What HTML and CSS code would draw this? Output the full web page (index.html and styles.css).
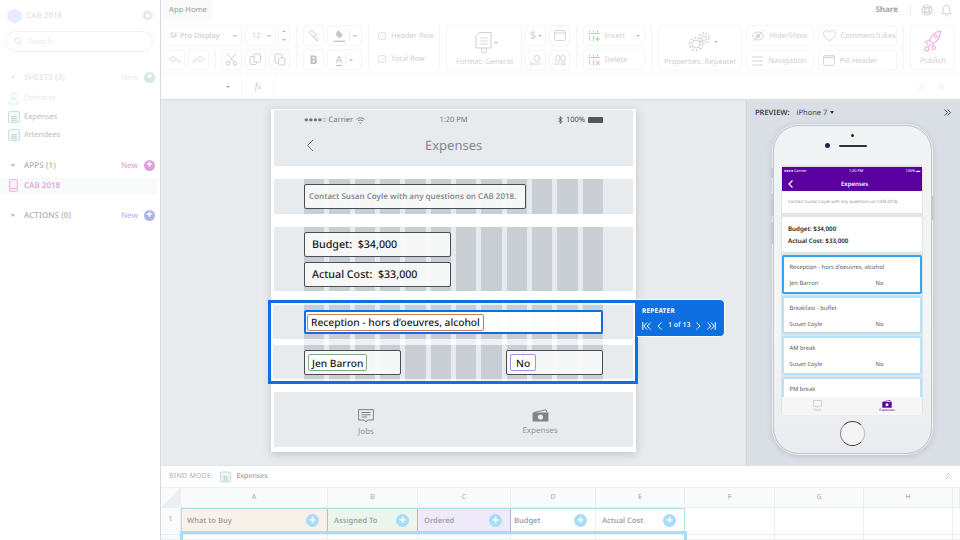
FILE: index.html
```html
<!DOCTYPE html>
<html lang="en">
<head>
  <meta charset="UTF-8" />
  <title>App Home</title>
  <link rel="stylesheet" href="styles.css">
</head>
<body>
<div class="app">

  <aside class="sidebar">
    <div class="brand">
      <svg class="logo" width="15" height="16" viewBox="0 0 15 16"><path d="M7.5 0.5 14.5 4.2V11.8L7.5 15.5 0.5 11.8V4.2Z" fill="#ecebfa"/><path d="M7.5 4 14.5 4.2V11.8L7.5 15.5Z" fill="#e2effa"/></svg>
      <span class="brand-name">CAB 2018</span>
      <svg class="brand-gear" width="11" height="11" viewBox="0 0 12 12"><circle cx="6" cy="6" r="3.4" fill="none" stroke="#e6e6e6" stroke-width="2"/><circle cx="6" cy="6" r="5" fill="none" stroke="#e6e6e6" stroke-width="1.6" stroke-dasharray="1.6 1.6"/></svg>
    </div>
    <div class="search">
      <svg width="9" height="9" viewBox="0 0 10 10"><circle cx="4" cy="4" r="3" fill="none" stroke="#e2e2e2" stroke-width="1.1"/><path d="M6.3 6.3 9 9" stroke="#e2e2e2" stroke-width="1.1"/></svg>
      <span>Search…</span>
    </div>

    <div class="sec sec-sheets">
      <span class="caret"></span><span class="sec-title">SHEETS (3)</span>
      <span class="sec-new">New</span><span class="plus">+</span>
    </div>
    <ul class="items">
      <li class="item item-dim">
        <svg width="12" height="13" viewBox="0 0 12 13"><circle cx="5.5" cy="4" r="2.8" fill="none" stroke="#d8ece9"/><path d="M0.8 12C0.8 8.5 3 7.5 5.5 7.5S10 8.500 10 12Z" fill="none" stroke="#d8ece9"/></svg>
        Contacts
      </li>
      <li class="item">
        <svg width="12" height="12" viewBox="0 0 12 12"><rect x=".6" y=".6" width="10.800" height="10.800" rx="1" fill="#f4fafa" stroke="#bfe0dc"/><path d="M3 5.500H9M3 7.500H9M3 9.500H9M5 5.500V9.500M7 5.500V9.500" stroke="#bfd6d4" stroke-width=".8"/></svg>
        Expenses
      </li>
      <li class="item">
        <svg width="12" height="12" viewBox="0 0 12 12"><rect x=".6" y=".6" width="10.800" height="10.800" rx="1" fill="#f4fafa" stroke="#bfe0dc"/><path d="M3 5.500H9M3 7.500H9M3 9.500H9M5 5.500V9.500M7 5.500V9.500" stroke="#bfd6d4" stroke-width=".8"/></svg>
        Attendees
      </li>
    </ul>

    <div class="sec sec-apps">
      <span class="caret"></span><span class="sec-title">APPS (1)</span>
      <span class="sec-new new-pink">New</span><span class="plus plus-pink">+</span>
    </div>
    <div class="app-row">
      <svg width="9" height="13" viewBox="0 0 9 13"><rect x=".6" y=".6" width="7.800" height="11.800" rx="1.200" fill="#fbeef8" stroke="#e9b4df"/><path d="M.6 9.500H8.400" stroke="#e9b4df"/></svg>
      <span>CAB 2018</span>
    </div>

    <div class="sec sec-actions">
      <span class="caret"></span><span class="sec-title">ACTIONS (0)</span>
      <span class="sec-new new-blue">New</span><span class="plus plus-blue">+</span>
    </div>
  </aside>

  <main class="main">
    <header class="tabs">
      <div class="tab">App Home</div>
      <div class="tabs-right">
        <span class="share">Share</span>
        <svg width="12" height="12" viewBox="0 0 12 12"><circle cx="6" cy="6" r="5" fill="none" stroke="#cfcfcf" stroke-width="1.100"/><circle cx="6" cy="6" r="2.400" fill="none" stroke="#cfcfcf" stroke-width="1.100"/><path d="M2.500 2.500 4.300 4.300M9.500 2.500 7.700 4.300M2.500 9.500 4.300 7.700M9.500 9.500 7.700 7.700" stroke="#cfcfcf" stroke-width="1.100"/></svg>
        <svg width="11" height="13" viewBox="0 0 11 13"><path d="M5.500 1C3 1 2.300 3 2.300 5.500 2.300 8 1.500 9 .8 9.800H10.200C9.500 9 8.700 8 8.700 5.500 8.700 3 8 1 5.500 1Z" fill="none" stroke="#cfcfcf"/><path d="M4.300 11.300C4.800 12.300 6.200 12.300 6.700 11.300" fill="none" stroke="#cfcfcf"/></svg>
      </div>
    </header>

    <section class="ribbon">
      <div class="rgroup g-font">
        <div class="rrow">
          <div class="rbtn font-name"><span>SF Pro Display</span><i class="drop"></i></div>
          <div class="rbtn font-size"><span>12</span><i class="drop"></i></div>
          <div class="stepper"><i class="up"></i><i class="down"></i></div>
        </div>
        <div class="rrow">
          <div class="rbtn sq"><svg width="13" height="9" viewBox="0 0 13 9"><path d="M5 .8 .8 4 5 7V5.200C8 5 10.500 5.500 12 8 12 4.500 9 2.800 5 2.800Z" fill="none" stroke="#dcdcdc" stroke-width=".9"/></svg></div>
          <div class="rbtn sq"><svg width="13" height="9" viewBox="0 0 13 9"><path d="M8 .8 12.200 4 8 7V5.200C5 5 2.500 5.500 1 8 1 4.500 4 2.800 8 2.800Z" fill="none" stroke="#dcdcdc" stroke-width=".9"/></svg></div>
          <span class="rsep"></span>
          <div class="rbtn sq"><svg width="13" height="13" viewBox="0 0 13 13"><path d="M2 .5 9 9M11 .5 4 9" stroke="#c9c9c9" stroke-width=".9"/><circle cx="3" cy="10.500" r="1.800" fill="none" stroke="#c9c9c9" stroke-width=".9"/><circle cx="10" cy="10.500" r="1.800" fill="none" stroke="#c9c9c9" stroke-width=".9"/></svg></div>
          <div class="rbtn sq"><svg width="13" height="13" viewBox="0 0 13 13"><rect x="1" y="3.500" width="6.500" height="8" rx="1" fill="none" stroke="#cfcfcf"/><rect x="5" y="1" width="6.500" height="8" rx="1" fill="#fff" stroke="#cfcfcf"/></svg></div>
          <div class="rbtn sq"><svg width="12" height="13" viewBox="0 0 12 13"><rect x="1" y="1" width="7" height="9" rx="1" fill="none" stroke="#cfcfcf"/><rect x="4.500" y="5" width="6.500" height="7" rx="1" fill="#fff" stroke="#cfcfcf"/></svg></div>
        </div>
      </div>

      <div class="rgroup g-paint">
        <div class="rrow">
          <div class="rbtn sq"><svg width="13" height="13" viewBox="0 0 13 13"><path d="M4.500 1 9 5.500 6.500 8 2 3.500Z" fill="none" stroke="#c9c9c9"/><path d="M7.500 7 11 10.500 10 12 6.500 8.500" fill="none" stroke="#c9c9c9"/></svg></div>
          <div class="rbtn wide"><svg width="13" height="13" viewBox="0 0 13 13"><path d="M5 1 10 6 6.500 9.500 2.500 5.500Z" fill="#c9c9c9"/><path d="M.5 12.300H12" stroke="#b9b9b9" stroke-width="1.200"/></svg><i class="split"></i><i class="drop"></i></div>
        </div>
        <div class="rrow">
          <div class="rbtn sq bold-b">B</div>
          <div class="rbtn wide"><span class="color-a">A</span><i class="split"></i><i class="drop"></i></div>
        </div>
      </div>

      <div class="rgroup g-checks">
        <label class="check"><i></i>Header Row</label>
        <label class="check"><i></i>Total Row</label>
      </div>

      <div class="rgroup g-format">
        <div class="rbtn big fmt">
          <div class="big-icon">
            <svg width="17" height="22" viewBox="0 0 17 22"><path d="M4 .6H16V16H1V4Z" fill="none" stroke="#cfcfcf"/><path d="M4.500 6H12.500M4.500 9H12.500M4.500 12H12.500" stroke="#d6d6d6"/><circle cx="9" cy="18.500" r="2.600" fill="#fff" stroke="#cfcfcf"/></svg>
            <i class="drop"></i>
          </div>
          <span>Format: General</span>
        </div>
        <div class="fmt-grid">
          <div class="rbtn sq dollar"><span>$</span><i class="drop"></i></div>
          <div class="rbtn sq"><svg width="12" height="11" viewBox="0 0 12 11"><rect x=".6" y=".6" width="10.800" height="9.800" rx="1" fill="none" stroke="#d4d4d4"/><path d="M.6 3H11.400" stroke="#d4d4d4"/></svg></div>
          <div class="rbtn sq"><svg width="13" height="13" viewBox="0 0 13 13"><ellipse cx="8" cy="4.500" rx="2.500" ry="3.500" fill="none" stroke="#d4d4d4"/><path d="M12 10H1M3 8 1 10 3 12M1 6.500H2" fill="none" stroke="#d4d4d4" stroke-width=".9"/></svg></div>
          <div class="rbtn sq"><svg width="13" height="13" viewBox="0 0 13 13"><ellipse cx="5" cy="4.500" rx="2" ry="3.500" fill="none" stroke="#d4d4d4"/><ellipse cx="10" cy="4.500" rx="2" ry="3.500" fill="none" stroke="#d4d4d4"/><path d="M1 10H12M10 8 12 10 10 12" fill="none" stroke="#d4d4d4" stroke-width=".9"/></svg></div>
        </div>
      </div>

      <div class="rgroup g-table">
        <div class="rbtn tool">
          <svg width="12" height="12" viewBox="0 0 12 12"><path d="M.5 3.500H11.500" stroke="#a9d9a9"/><path d="M1.500 .5V2.500M5.500 .5V2.500M9.500 .5V2.500M1.500 5.500V11M5.500 5.500V11" stroke="#c9c9c9"/><path d="M9.500 6.500V11.500M7 9H12" stroke="#a9d9a9" stroke-width="1.200"/></svg>
          <span>Insert</span><i class="drop"></i>
        </div>
        <div class="rbtn tool">
          <svg width="12" height="12" viewBox="0 0 12 12"><path d="M.5 3.500H11.500" stroke="#e8b4b4"/><path d="M1.500 .5V2.500M5.500 .5V2.500M9.500 .5V2.500M1.500 5.500V11M5.500 5.500V11" stroke="#c9c9c9"/><path d="M8 7 11.500 11M11.500 7 8 11" stroke="#e8b4b4" stroke-width="1.100"/></svg>
          <span>Delete</span>
        </div>
      </div>

      <div class="rgroup g-props">
        <div class="rbtn big props">
          <div class="big-icon">
            <svg width="24" height="20" viewBox="0 0 24 20"><circle cx="8" cy="12" r="4" fill="none" stroke="#cfcfcf"/><circle cx="8" cy="12" r="6.500" fill="none" stroke="#cfcfcf" stroke-width="1.500" stroke-dasharray="2 2"/><circle cx="16" cy="6" r="2.500" fill="none" stroke="#cfcfcf"/><circle cx="16" cy="6" r="5" fill="none" stroke="#cfcfcf" stroke-width="1.300" stroke-dasharray="2 1.500"/></svg>
            <i class="drop"></i>
          </div>
          <span>Properties: Repeater</span>
        </div>
        <div class="tool-grid">
          <div class="rbtn tool">
            <svg width="14" height="12" viewBox="0 0 14 12"><path d="M1 6C3 3 5 2 7 2S11 3 13 6C11 9 9 10 7 10S3 9 1 6Z" fill="none" stroke="#d4d4d4"/><circle cx="7" cy="6" r="2" fill="#d4d4d4"/><path d="M2.500 11.500 12 .5" stroke="#d4d4d4"/></svg>
            <span>Hide/Show</span>
          </div>
          <div class="rbtn tool">
            <svg width="13" height="12" viewBox="0 0 13 12"><path d="M6.500 11C1 7 .6 5 .6 3.500.6 1.800 2 .6 3.600 .6 5 .6 6 1.300 6.500 2.400 7 1.300 8 .6 9.400 .6 11 .6 12.400 1.800 12.400 3.500 12.400 5 12 7 6.500 11Z" fill="none" stroke="#d0d0d0"/></svg>
            <span>Comment/Likes</span>
          </div>
          <div class="rbtn tool">
            <svg width="13" height="10" viewBox="0 0 13 10"><path d="M1 1H12M1 5H12M1 9H12" stroke="#d4d4d4"/></svg>
            <span>Navigation</span>
          </div>
          <div class="rbtn tool">
            <svg width="12" height="11" viewBox="0 0 12 11"><rect x=".6" y=".6" width="10.800" height="9.800" rx="1" fill="none" stroke="#d4d4d4"/><path d="M.6 2.500H11.400" stroke="#d4d4d4" stroke-width="1.400"/></svg>
            <span>Pill Header</span>
          </div>
        </div>
      </div>

      <div class="rgroup g-publish">
        <div class="rbtn big publish">
          <svg width="19" height="23" viewBox="0 0 16 20"><path d="M15 1C10.500 1.500 7 4.500 5.500 9L8.500 12C12.500 10 14.800 6 15 1Z" fill="none" stroke="#f0b3e6" stroke-width="1.100"/><circle cx="10.800" cy="5.500" r="1.300" fill="none" stroke="#f0b3e6"/><circle cx="3" cy="16.500" r="1.800" fill="none" stroke="#f0b3e6"/><circle cx="9" cy="15.500" r="1.500" fill="none" stroke="#f0b3e6"/><path d="M5.500 9 2 10 4 13M8.500 12 8 14M4.500 14.500 6.500 12" fill="none" stroke="#f0b3e6"/></svg>
          <span>Publish</span>
        </div>
      </div>
    </section>

    <section class="formula">
      <i class="drop formula-drop"></i>
      <span class="fx"><i>f</i><small>x</small></span>
      <span class="formula-btns">
        <svg width="8" height="7" viewBox="0 0 8 7"><path d="M.5 4 3 6 7.500 .5" fill="none" stroke="#e8e8e8"/></svg>
        <svg width="7" height="7" viewBox="0 0 7 7"><path d="M.5 .5 6.500 6.500M6.500 .5 .5 6.500" stroke="#e8e8e8"/></svg>
      </span>
    </section>

    <section class="work">
      <div class="canvas">
        <div class="artboard">
          <div class="ab-head">
            <div class="status">
              <span class="status-left">●●●●○ Carrier
                <svg width="9" height="7" viewBox="0 0 9 7"><path d="M.5 2.500C3 .2 6 .2 8.500 2.500M2 4C3.500 2.800 5.500 2.800 7 4M3.500 5.500 4.500 6.500 5.500 5.500" fill="none" stroke="#777"/></svg>
              </span>
              <span>1:20 PM</span>
              <span class="status-right">
                <svg width="5" height="8" viewBox="0 0 5 8"><path d="M.5 2 4 5.500 2.300 7.500V.5L4 2.500 .5 6" fill="none" stroke="#444" stroke-width=".8"/></svg>
                100%
                <i class="battery"></i>
              </span>
            </div>
            <div class="ab-title">
              <svg width="8" height="13" viewBox="0 0 8 13"><path d="M7 1 1.500 6.500 7 12" fill="none" stroke="#6b7076"/></svg>
              <span>Expenses</span>
            </div>
          </div>

          <div class="band band-contact">
            <div class="field field-contact">Contact Susan Coyle with any questions on CAB 2018.</div>
          </div>

          <div class="band band-totals">
            <div class="field field-total">Budget:&nbsp; $34,000</div>
            <div class="field field-total">Actual Cost:&nbsp; $33,000</div>
          </div>

          <div class="repeater">
            <div class="band band-title">
              <div class="field field-active"><span class="chip chip-orange">Reception - hors d’oeuvres, alcohol</span></div>
            </div>
            <div class="band band-row">
              <div class="field field-half"><span class="chip chip-green">Jen Barron</span></div>
              <div class="field field-half"><span class="chip chip-purple">No</span></div>
            </div>
            <div class="rep-tab">
              <div class="rep-name">REPEATER</div>
              <div class="rep-nav">
                <svg width="9" height="8" viewBox="0 0 9 8"><path d="M.8 0V8M5 .5 1.800 4 5 7.500M8.500 .5 5.300 4 8.500 7.500" fill="none" stroke="#fff"/></svg>
                <svg width="5" height="8" viewBox="0 0 5 8"><path d="M4.500 .5 1 4 4.500 7.500" fill="none" stroke="#fff"/></svg>
                <span>1 of 13</span>
                <svg width="5" height="8" viewBox="0 0 5 8"><path d="M.5 .5 4 4 .5 7.500" fill="none" stroke="#fff"/></svg>
                <svg width="9" height="8" viewBox="0 0 9 8"><path d="M8.200 0V8M4 .5 7.200 4 4 7.500M.5 .5 3.700 4 .5 7.500" fill="none" stroke="#fff"/></svg>
              </div>
            </div>
          </div>

          <div class="ab-nav">
            <div class="ab-nav-item">
              <svg width="16" height="14" viewBox="0 0 16 14"><path d="M.6 .6H15.400V11H9.500L8 13 6.500 11H.6Z" fill="none" stroke="#7d838a"/><path d="M3.500 3.500H12.500M3.500 5.800H12.500M3.500 8H9" stroke="#7d838a"/></svg>
              <span>Jobs</span>
            </div>
            <div class="ab-nav-item">
              <svg width="17" height="13" viewBox="0 0 17 13"><path d="M2 3.500 14 .8 15 3.500" fill="none" stroke="#7d838a"/><rect x=".6" y="3.500" width="15.800" height="9" fill="#7d838a"/><circle cx="8.500" cy="8" r="2.600" fill="#e8ebee"/></svg>
              <span>Expenses</span>
            </div>
          </div>
        </div>
      </div>

      <aside class="preview">
        <div class="preview-head">
          <b>PREVIEW:</b><span>iPhone 7</span><i class="arrow"></i>
          <svg class="collapse" width="7" height="7" viewBox="0 0 7 7"><path d="M.5 .5 3.500 3.500 .5 6.500M3.500 .5 6.500 3.500 3.500 6.500" fill="none" stroke="#444"/></svg>
        </div>
        <div class="phone">
          <i class="side side-mute"></i><i class="side side-up"></i><i class="side side-down"></i><i class="side side-lock"></i>
          <div class="phone-top">
            <i class="cam"></i>
            <div class="ear"><i class="lens"></i><i class="speaker"></i></div>
          </div>
          <div class="screen">
            <div class="s-head">
              <div class="s-status"><span>●●●● Carrier</span><span>1:20 PM</span><span>100% ▬</span></div>
              <div class="s-title">
                <svg width="5" height="8" viewBox="0 0 5 8"><path d="M4.500 .5 1 4 4.500 7.500" fill="none" stroke="#fff" stroke-width="1.200"/></svg>
                <b>Expenses</b>
              </div>
            </div>
            <div class="s-contact">Contact Susan Coyle with any questions on CAB 2018.</div>
            <div class="s-totals">
              <div>Budget: $34,000</div>
              <div>Actual Cost: $33,000</div>
            </div>
            <div class="s-list">
              <div class="s-card s-card-on">
                <div>Reception - hors d'oeuvres, alcohol</div>
                <div class="s-line"><span>Jen Barron</span><span>No</span></div>
              </div>
              <div class="s-card">
                <div>Breakfast - buffet</div>
                <div class="s-line"><span>Susan Coyle</span><span>No</span></div>
              </div>
              <div class="s-card">
                <div>AM break</div>
                <div class="s-line"><span>Susan Coyle</span><span>No</span></div>
              </div>
              <div class="s-card">
                <div>PM break</div>
              </div>
            </div>
            <div class="s-tabs">
              <div class="s-tab">
                <svg width="9" height="8" viewBox="0 0 9 8"><path d="M.4 .4H8.600V6.300H5.300L4.500 7.500 3.700 6.300H.4Z" fill="none" stroke="#c2c2c2" stroke-width=".7"/></svg>
                <span>Feed</span>
              </div>
              <div class="s-tab s-tab-on">
                <svg width="10" height="8" viewBox="0 0 10 8"><path d="M1 2 8 .3 9 2" fill="none" stroke="#5b00a0" stroke-width=".7"/><rect x=".3" y="2" width="9.400" height="5.700" fill="#5b00a0"/><circle cx="5" cy="4.800" r="1.500" fill="#fff"/></svg>
                <span>Expenses</span>
              </div>
            </div>
          </div>
          <div class="phone-chin"><i class="home"></i></div>
        </div>
      </aside>
    </section>

    <section class="bind">
      <span class="bind-label">BIND MODE:</span>
      <svg width="11" height="12" viewBox="0 0 12 12"><rect x=".6" y=".6" width="10.800" height="10.800" rx="1" fill="#f0f8f8" stroke="#b6dcd8"/><path d="M3 5.500H9M3 7.500H9M3 9.500H9M5 5.500V9.500M7 5.500V9.500" stroke="#b6d0ce" stroke-width=".8"/></svg>
      <span class="bind-name">Expenses</span>
      <svg class="bind-up" width="7" height="7" viewBox="0 0 7 7"><path d="M.5 3.500 3.500 .5 6.500 3.500M.5 6.500 3.500 3.500 6.500 6.500" fill="none" stroke="#cfcfcf"/></svg>
    </section>

    <section class="sheet">
      <div class="hd corner"></div>
      <div class="hd">A</div><div class="hd">B</div><div class="hd">C</div><div class="hd">D</div>
      <div class="hd">E</div><div class="hd">F</div><div class="hd">G</div><div class="hd">H</div><div class="hd"></div>

      <div class="rownum">1</div>
      <div class="cell cell-a">What to Buy<span class="cell-plus">+</span></div>
      <div class="cell cell-b">Assigned To<span class="cell-plus">+</span></div>
      <div class="cell cell-c">Ordered<span class="cell-plus">+</span></div>
      <div class="cell cell-d">Budget<span class="cell-plus">+</span></div>
      <div class="cell">Actual Cost<span class="cell-plus">+</span></div>
      <div class="cell"></div><div class="cell"></div><div class="cell"></div><div class="cell"></div>

      <div class="rownum"></div>
      <div class="cell tint-a"></div><div class="cell tint-b"></div><div class="cell tint-c"></div>
      <div class="cell"></div><div class="cell"></div><div class="cell"></div><div class="cell"></div><div class="cell"></div><div class="cell"></div>

      <div class="bound-head"></div>
      <div class="bound-rows"></div>
    </section>
  </main>
</div>
</body>
</html>
```

FILE: styles.css
```css
* { box-sizing: border-box; }

html, body {
  margin: 0;
  height: 100%;
  overflow: hidden;
  background: #fff;
  font-family: "Noto Sans", "Open Sans", sans-serif;
  text-rendering: geometricPrecision;
}

.app {
  display: grid;
  grid-template-columns: 161px 1fr;
  width: 960px;
  height: 540px;
}

/* sidebar */
.sidebar {
  border-right: 1px solid #d6dae0;
  padding: 0 3px 0 0;
  color: #e2e2e2;
  font-size: 8px;
}
.brand {
  display: flex;
  align-items: center;
  height: 31px;
  padding: 0 4px 0 7px;
  font-weight: 600;
  color: #e6e6e6;
}
.logo { margin-right: 4px; }
.brand-gear { margin-left: auto; }
.search {
  display: flex;
  align-items: center;
  gap: 5px;
  width: 148px;
  height: 21px;
  margin-left: 5px;
  padding-left: 8px;
  border: 1px solid #f0f0f2;
  border-radius: 11px;
  font-style: italic;
  color: #ececec;
}
.sec {
  display: flex;
  align-items: center;
  height: 12px;
  padding: 0 2px 0 11px;
}
.sec-sheets { margin-top: 19px; }
.sec-apps { margin-top: 15px; }
.sec-actions { margin-top: 16px; }
.caret {
  width: 0;
  height: 0;
  border: 2.500px solid transparent;
  border-top: 3px solid #b8b8b8;
  border-bottom: 0;
  margin-right: 9px;
}
.sec-sheets .caret { border-top-color: #e6e6e6; }
.sec-title {
  font-weight: 500;
  letter-spacing: .1px;
  color: #aeaeae;
}
.sec-sheets .sec-title { color: #e2e2e2; }
.sec-new { margin-left: auto; margin-right: 6px; color: #eeeeee; font-weight: 500; }
.new-pink { color: #e3a8dc; }
.new-blue { color: #b5bcec; }
.plus {
  width: 11px;
  height: 11px;
  border-radius: 50%;
  background: #d3e8ea;
  color: #fff;
  font-size: 11px;
  font-weight: 700;
  line-height: 10px;
  text-align: center;
}
.plus-pink { background: #dca0dc; }
.plus-blue { background: #aab4ea; }
.items { list-style: none; margin: 6px 0 0; padding: 0 0 0 8px; font-size: 7.600px; }
.item {
  display: flex;
  align-items: center;
  gap: 4px;
  height: 18.500px;
  color: #bdbdbd;
}
.item-dim { color: #eaeaea; }
.app-row {
  display: flex;
  align-items: center;
  gap: 6px;
  height: 16px;
  margin-top: 6px;
  padding-left: 9px;
  background: #f8f9fb;
  color: #e3a8dc;
  font-weight: 600;
}

/* top tabs */
.main { display: flex; flex-direction: column; min-width: 0; }
.tabs {
  display: flex;
  justify-content: space-between;
  height: 20px;
  padding-left: 2px;
}
.tab {
  width: 50px;
  background: #fafafa;
  color: #a8a8a8;
  font-size: 7.500px;
  font-weight: 500;
  line-height: 21px;
  text-align: center;
}
.tabs-right {
  display: flex;
  align-items: center;
  gap: 8px;
  padding-right: 8px;
}
.share {
  margin-right: 2px;
  padding-right: 12px;
  border-right: 1px solid #f0f0f0;
  color: #a4a4a4;
  font-size: 8px;
  font-weight: 700;
  line-height: 12px;
}

/* ribbon */
.ribbon {
  display: flex;
  height: 54px;
  padding: 4px 0 3px;
  border-top: 1px solid #fbfbfb;
  border-bottom: 1px solid #f5f6f8;
  color: #d0d0d0;
  font-size: 7.500px;
}
.rgroup {
  display: flex;
  flex-direction: column;
  justify-content: space-between;
  padding: 0 6px;
  border-right: 1px solid #f3f4f7;
}
.g-font { width: 136px; padding-left: 3px; }
.g-paint { width: 72px; }
.g-checks { width: 72px; padding: 6px 0 6px 9px; }
.g-format { width: 137px; flex-direction: row; gap: 3px; }
.g-table { width: 75px; }
.g-props { width: 252px; flex-direction: row; gap: 4px; }
.g-publish { width: 56px; padding-right: 4px; border-right: 0; }
.rrow { display: flex; gap: 3px; height: 21px; }
.rbtn {
  display: flex;
  align-items: center;
  justify-content: center;
  height: 21px;
  border: 1px solid #f4f6fb;
  border-radius: 3px;
  background: #fff;
}
.sq { width: 21px; flex: none; }
.wide { width: 35px; gap: 3px; }
.font-name { width: 78px; justify-content: space-between; padding: 0 4px 0 5px; color: #c4c4c4; }
.font-size { width: 31px; justify-content: space-between; padding: 0 4px 0 6px; }
.drop {
  display: inline-block;
  width: 0;
  height: 0;
  border: 2px solid transparent;
  border-top: 2px solid #bdbdbd;
  border-bottom: 0;
}
.split { width: 1px; height: 11px; background: #f0f0f0; }
.stepper {
  display: flex;
  flex-direction: column;
  justify-content: space-around;
  align-items: center;
  width: 12px;
  margin-left: -1px;
  border: 1px solid #f6f7fb;
  border-radius: 3px;
}
.up, .down { width: 0; height: 0; border: 2px solid transparent; }
.up { border-top: 0; border-bottom-color: #bdbdbd; }
.down { border-bottom: 0; border-top-color: #bdbdbd; }
.rsep { width: 1px; height: 21px; margin: 0 2.500px; background: #f3f4f7; }
.bold-b { color: #c0c0c0; font-size: 12px; font-weight: 700; }
.color-a {
  border-bottom: 1px solid #b9b9b9;
  color: #c0c0c0;
  font-size: 10px;
  line-height: 12px;
}
.check { display: flex; align-items: center; gap: 5px; }
.check i {
  width: 8px;
  height: 8px;
  border: 1px solid #e4e4e4;
  border-radius: 2px;
  background: #fafafa;
}
.big {
  flex-direction: column;
  justify-content: space-between;
  height: 46px;
  padding: 6px 0 3px;
}
.big-icon { display: flex; align-items: center; gap: 2px; padding-left: 5px; }
.fmt { width: 76px; }
.props { width: 84px; }
.publish { width: 45px; padding-top: 4px; }
.fmt-grid { display: grid; grid-template-columns: 21px 21px; gap: 3px; align-content: space-between; height: 46px; }
.dollar { gap: 2px; font-size: 11px; color: #cfcfcf; }
.tool { justify-content: flex-start; gap: 4px; padding-left: 4px; width: 62px; }
.tool-grid { display: grid; grid-template-columns: 68px 79px; gap: 3px 4px; align-content: space-between; height: 46px; }
.tool-grid .tool { width: auto; }
.tool .drop { margin-left: auto; margin-right: 4px; }

/* formula bar */
.formula {
  display: flex;
  align-items: center;
  height: 26px;
  padding-left: 65px;
  border-bottom: 1px solid #dcdfe3;
  box-shadow: 0 1px 1px #e2e5e9;
  color: #c4c4c4;
  z-index: 1;
}
.formula-drop { border-top-color: #a8a8a8; }
.fx {
  width: 34px;
  height: 100%;
  margin-left: 11px;
  border-left: 1px solid #f8f8f8;
  border-right: 1px solid #f8f8f8;
  font-family: "Liberation Serif", serif;
  font-size: 10px;
  line-height: 26px;
  text-align: center;
}
.fx small { font-size: 7px; }
.formula-btns { display: flex; gap: 13px; margin-left: auto; padding-right: 15px; }

/* workspace */
.work { display: flex; height: 365px; }
.canvas {
  flex: 1;
  padding: 9px 0 0 110px;
  background: #e8ebee;
  border-right: 1px solid #c9ced4;
}
.artboard {
  display: flex;
  flex-direction: column;
  width: 365px;
  height: 343px;
  padding: 1px 3px 0;
  background: #fff;
  box-shadow: 0 2px 8px rgba(80, 90, 100, .28);
}
.ab-head { height: 56px; background: #e8ebee; padding: 0 30px; }
.status {
  display: grid;
  grid-template-columns: 1fr auto 1fr;
  height: 20px;
  align-items: center;
  color: #6f757b;
  font-size: 7.500px;
}
.status-left { display: flex; align-items: center; gap: 3px; }
.status-right { display: flex; align-items: center; justify-content: flex-end; gap: 3px; color: #4a4a4a; }
.battery { width: 15px; height: 6px; border-radius: 1px; background: #555; }
.ab-title {
  display: flex;
  align-items: center;
  height: 30px;
  padding-left: 2px;
  color: #83888e;
  font-size: 13px;
}
.ab-title span { margin-left: 111px; }

.band {
  padding-left: 30px;
  background-color: #e8ebee;
  background-image: repeating-linear-gradient(90deg, #c9ced5 0 20.300px, transparent 20.300px 25.330px);
  background-position: 30px 0;
  background-size: 299px 100%;
  background-repeat: no-repeat;
}
.band-contact { height: 35px; margin-top: 13px; padding-top: 5px; }
.band-totals { display: flex; flex-direction: column; gap: 5px; height: 64px; margin-top: 13px; padding-top: 5px; }
.field {
  display: flex;
  align-items: center;
  height: 25px;
  padding-left: 7px;
  border: 1px solid #4a4d51;
  border-radius: 2px;
  background: rgba(250, 250, 250, .93);
  color: #17191b;
  font-size: 10.700px;
  font-weight: 500;
}
.field-contact {
  width: 222px;
  padding-left: 4px;
  color: #888d92;
  font-size: 8px;
  font-weight: 600;
  white-space: nowrap;
}
.field-total { width: 147px; }
.field-active {
  width: 299px;
  height: 24px;
  padding-left: 1px;
  border: 2px solid #0d6fe0;
  background: rgba(255, 255, 255, .95);
}
.field-half { width: 97px; padding-left: 3px; }
.chip {
  display: flex;
  align-items: center;
  height: 17px;
  padding: 0 3px;
  border: 1px solid;
  border-radius: 2px;
  background: #fff;
  font-size: 10.200px;
}
.chip-orange { border-color: #c97f5e; }
.chip-green { border-color: #7fae7f; }
.chip-purple { border-color: #a98fe0; padding: 0 5px; }

.repeater {
  position: relative;
  display: flex;
  flex-direction: column;
  gap: 6px;
  flex: none;
  width: 370px;
  height: 84px;
  margin: 9px 0 8px -6px;
  padding: 2px;
  border: 3px solid #0d6fe0;
  background-image: repeating-linear-gradient(90deg, #eef0f3 0 20.300px, transparent 20.300px 25.330px);
  background-position: 33px 0;
  background-size: 299px 100%;
  background-repeat: no-repeat;
}
.repeater .band { padding-left: 31px; background-position: 31px 0; }
.band-title { height: 34px; padding-top: 5px; }
.repeater .band-row { display: flex; justify-content: space-between; height: 34px; padding: 5px 30px 0 31px; }
.rep-tab {
  position: absolute;
  top: -4px;
  left: 366px;
  width: 88px;
  height: 38px;
  padding: 6px 0 0 5px;
  border: 1px solid #fff;
  border-left: 0;
  border-radius: 0 5px 5px 0;
  background: #0d6fe0;
  color: #fff;
}
.rep-name { font-size: 6.500px; font-weight: 700; letter-spacing: .2px; }
.rep-nav { display: flex; align-items: center; gap: 6px; margin-top: 6px; font-size: 7px; font-weight: 500; }

.ab-nav { display: flex; height: 55px; padding: 0 6px 0 5px; background: #e8ebee; }
.ab-nav-item {
  display: flex;
  flex: 1;
  flex-direction: column;
  align-items: center;
  gap: 3px;
  padding-top: 17px;
  color: #8b9096;
  font-size: 8px;
}

/* device preview */
.preview { width: 213px; background: #d9dfe5; padding: 0 0 0 26px; }
.preview-head {
  display: flex;
  align-items: center;
  height: 25px;
  margin-left: -18px;
  color: #3f444a;
  font-size: 7.500px;
}
.preview-head b { margin-right: 7px; font-weight: 600; }
.arrow {
  margin-left: 3px;
  width: 0;
  height: 0;
  border: 2.500px solid transparent;
  border-top: 3px solid #333;
  border-bottom: 0;
}
.collapse { margin-left: auto; margin-right: 9px; }
.phone {
  position: relative;
  display: flex;
  flex-direction: column;
  width: 159px;
  height: 329px;
  border: 1.500px solid #c4c6ca;
  border-radius: 26px;
  background: linear-gradient(#f1f2f4, #f4f5f6 60%, #e9ebee);
  box-shadow: 0 0 0 1px #eceef0, 0 1px 6px rgba(90, 100, 110, .3);
}
.side { position: absolute; width: 2px; background: #c9cbcf; }
.side-mute { left: -3px; top: 42px; height: 10px; }
.side-up { left: -3px; top: 68px; height: 22px; }
.side-down { left: -3px; top: 96px; height: 22px; }
.side-lock { right: -3px; top: 70px; height: 24px; }
.phone-top { display: flex; flex-direction: column; align-items: center; height: 39px; padding-top: 8px; }
.cam { width: 3px; height: 3px; border-radius: 50%; background: #222; }
.ear { display: flex; align-items: center; gap: 9px; margin: 6px 0 0 -14px; }
.lens { width: 5px; height: 5px; border-radius: 50%; background: #1c2a44; }
.speaker { width: 28px; height: 2px; border-radius: 1px; background: #333; }
.screen {
  position: relative;
  display: flex;
  flex-direction: column;
  width: 142px;
  height: 250px;
  margin-left: 7px;
  padding: 2px 1px 0;
  overflow: hidden;
  background: #e2e3e5;
  border-radius: 2px;
  color: #55585c;
  font-size: 5.800px;
}
.s-head { height: 24px; flex: none; background: #5b00a0; color: #fff; }
.s-status { display: flex; justify-content: space-between; height: 9px; padding: 0 2px; font-size: 3.800px; line-height: 9px; }
.s-title { display: flex; align-items: center; height: 15px; padding-left: 6px; }
.s-title b { margin-left: 48px; font-size: 6px; font-weight: 600; }
.s-contact { height: 22px; flex: none; padding-left: 6px; background: #fff; color: #999; font-size: 4.400px; line-height: 22px; white-space: nowrap; }
.s-totals {
  display: flex;
  flex-direction: column;
  justify-content: center;
  gap: 4px;
  flex: none;
  height: 35px;
  margin-top: 4px;
  padding-left: 6px;
  background: #fff;
  color: #222;
  font-size: 6.200px;
  font-weight: 600;
  line-height: 8px;
}
.s-list { display: flex; flex-direction: column; gap: 2px; margin-top: 3px; line-height: 8px; }
.s-card {
  height: 38.500px;
  flex: none;
  padding: 6px 0 0 5.500px;
  border: 2px solid #b8e2fb;
  border-radius: 2px;
  background: #fff;
}
.s-card-on { border-color: #2fa8f0; }
.s-line { display: flex; margin-top: 8px; }
.s-line span:first-child { width: 86px; }
.s-tabs {
  position: absolute;
  left: 1px;
  right: 1px;
  bottom: 0;
  display: flex;
  height: 18px;
  background: #f6f6f6;
}
.s-tab {
  display: flex;
  flex: 1;
  flex-direction: column;
  align-items: center;
  padding-top: 3px;
  color: #c2c2c2;
  font-size: 3.500px;
}
.s-tab-on { color: #5b00a0; }
.phone-chin { display: flex; justify-content: center; padding-top: 6px; }
.home {
  width: 25px;
  height: 25px;
  border: 1px solid;
  border-color: #444 #bbb #333 #888;
  border-radius: 50%;
  background: #f4f4f5;
}

/* bind mode + sheet */
.bind {
  display: flex;
  align-items: center;
  height: 22px;
  padding-left: 8px;
  border-top: 1px solid #e2e5e9;
  color: #b0b0b0;
  font-size: 7px;
}
.bind-label { margin-right: 7px; letter-spacing: .25px; }
.bind-name { margin-left: 5px; color: #9c9c9c; font-weight: 500; }
.bind-up { margin-left: auto; margin-right: 8px; }
.sheet {
  position: relative;
  display: grid;
  flex: 1;
  grid-template-columns: 20px 147px 90px 93px 85px 89px 90px 89px 89px 7px;
  grid-template-rows: 20px 27px 1fr;
  border-top: 1px solid #eeeff2;
  color: #a8a8a8;
  font-size: 7px;
}
.hd {
  background: #f9fafc;
  border-right: 1px solid #eceef1;
  border-bottom: 1px solid #eceef1;
  line-height: 19px;
  text-align: center;
}
.corner { background: linear-gradient(135deg, #f9fafc 50%, #eceef1 50%); }
.rownum {
  background: #f9fafc;
  border-right: 1px solid #eceef1;
  border-bottom: 1px solid #eceef1;
  line-height: 24px;
  text-align: center;
}
.cell {
  display: flex;
  align-items: center;
  justify-content: space-between;
  padding: 0 8px 1px 6px;
  border-right: 1px solid #eceef1;
  border-bottom: 1px solid #eceef1;
  color: #a4a4a4;
  font-size: 7.500px;
  font-weight: 600;
}
.cell-a { background: #f8f1ea; border-right-color: #d0b8a8; }
.cell-b { background: #eaf5ec; border-right-color: #c0b8a8; }
.cell-c { background: #efeafa; border-right-color: #b8b0d8; }
.cell-d { padding-left: 3px; }
.tint-a { background: #fffdfb; }
.tint-b { background: #fbfefb; }
.tint-c { background: #fcfbff; }
.cell-plus {
  width: 13px;
  height: 13px;
  border-radius: 50%;
  background: #a8dcf8;
  color: #fff;
  font-size: 12px;
  font-weight: 700;
  line-height: 12px;
  text-align: center;
}
.bound-head {
  position: absolute;
  top: 20px;
  left: 20px;
  width: 504px;
  height: 24px;
  border: 1px solid #aee3dc;
  border-bottom: 0;
}
.bound-rows {
  position: absolute;
  top: 43px;
  left: 19px;
  width: 507px;
  height: 20px;
  border: 3px solid #a8dcf8;
  border-bottom: 0;
}
```
